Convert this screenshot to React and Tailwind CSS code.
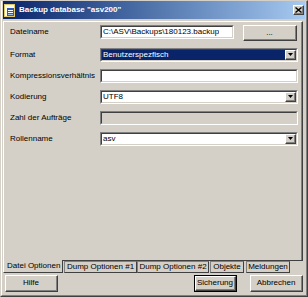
import React from "react";

const Sunken = ({ className = "", inner = "bg-white", children }) => (
  <div className={`border border-t-[#808080] border-l-[#808080] border-r-white border-b-white ${className}`}>
    <div className={`h-full w-full border border-t-[#404040] border-l-[#404040] border-r-[#d4d0c8] border-b-[#d4d0c8] flex items-center ${inner}`}>
      {children}
    </div>
  </div>
);

const Raised = ({ className = "", children }) => (
  <div className={`border border-t-white border-l-white border-r-[#404040] border-b-[#404040] bg-[#d4d0c8] ${className}`}>
    <div className="h-full w-full border-r border-b border-[#808080] flex items-center justify-center">
      {children}
    </div>
  </div>
);

const Arrow = () => (
  <Raised className="w-[11px] h-full shrink-0">
    <svg width="5" height="3" viewBox="0 0 5 3">
      <polygon points="0,0 5,0 2.5,3" fill="#000" />
    </svg>
  </Raised>
);

const Label = ({ children }) => (
  <div className="w-[90px] shrink-0 leading-[14px]">{children}</div>
);

const Combo = ({ text, selected }) => (
  <Sunken
    className="flex-1 h-[14px]"
    inner={selected ? "bg-[#0a246a] text-white" : "bg-white"}
  >
    <span className="flex-1 pl-[1px] leading-[10px] whitespace-nowrap overflow-hidden">{text}</span>
    <Arrow />
  </Sunken>
);

const Tab = ({ children, className = "" }) => (
  <div className={`h-[12px] border border-[#808080] border-r-[#404040] border-b-[#404040] flex items-center justify-center whitespace-nowrap leading-[10px] ${className}`}>
    {children}
  </div>
);

export default function App() {
  return (
    <div className="w-[308px] h-[297px] bg-[#d4d0c8] border border-t-[#d4d0c8] border-l-[#d4d0c8] border-r-[#404040] border-b-[#404040] font-['Liberation_Sans',Arial,sans-serif] text-[8px] text-black overflow-hidden">
      <div className="h-full w-full border-l border-r border-b border-l-white border-r-[#808080] border-b-[#808080] px-[1px] flex flex-col">
        {/* Title bar */}
        <div className="h-[18px] shrink-0 bg-linear-to-r from-[#0a246a] to-[#a6caf0] flex items-center">
          <svg width="11" height="13" viewBox="0 0 11 13" className="ml-[1px] shrink-0">
            <rect x="0.5" y="0.5" width="10" height="12" fill="#fffbe8" stroke="#e2c96a" />
            <rect x="3" y="4" width="7" height="8" fill="#2a5cc0" />
            <rect x="4" y="6" width="5" height="1" fill="#ffffff" />
            <rect x="4" y="8" width="5" height="1" fill="#ffffff" />
            <rect x="4" y="10" width="5" height="1" fill="#9cc0f0" />
          </svg>
          <span className="ml-[4px] text-white font-bold leading-[10px] whitespace-nowrap">Backup database "asv200"</span>
          <div className="ml-auto mr-[1px]">
            <Raised className="w-[11px] h-[10px]">
              <svg width="7" height="6" viewBox="0 0 7 6">
                <path d="M0.5 0.5 L6.5 5.5 M6.5 0.5 L0.5 5.5" stroke="#000" strokeWidth="1.4" />
              </svg>
            </Raised>
          </div>
        </div>

        {/* Tab pane */}
        <div className="mt-[2px] mr-[2px] h-[239px] shrink-0 border-l border-t border-r border-l-white border-t-white border-r-[#404040]">
          <div className="h-full border-r border-[#808080] pl-[6px] pr-[2px] pt-[3px] flex flex-col gap-[7px]">
            <div className="flex h-[16px] items-start">
              <Label>Dateiname</Label>
              <Sunken className="w-[134px] h-[14px]">
                <span className="pl-[1px] leading-[10px] whitespace-nowrap overflow-hidden">{"C:\\ASV\\Backups\\180123.backup"}</span>
              </Sunken>
              <Raised className="ml-[9px] w-[54px] h-[16px]">
                <span className="leading-[10px]">...</span>
              </Raised>
            </div>
            <div className="flex h-[14px] pr-[1px]">
              <Label>Format</Label>
              <Combo text="Benutzerspezfisch" selected />
            </div>
            <div className="flex h-[14px] pr-[1px]">
              <Label>Kompressionsverhältnis</Label>
              <Sunken className="flex-1 h-[14px]" />
            </div>
            <div className="flex h-[14px] pr-[1px]">
              <Label>Kodierung</Label>
              <Combo text="UTF8" />
            </div>
            <div className="flex h-[14px] pr-[1px]">
              <Label>Zahl der Aufträge</Label>
              <Sunken className="flex-1 h-[14px]" inner="bg-[#d4d0c8]" />
            </div>
            <div className="flex h-[14px] pr-[1px]">
              <Label>Rollenname</Label>
              <Combo text="asv" />
            </div>
          </div>
        </div>

        {/* Tabs */}
        <div className="h-[13px] shrink-0 flex mr-[2px]">
          <div className="w-[60px] h-full border-l border-r border-b border-l-white border-r-[#404040] border-b-[#404040] pl-[3px] flex items-center whitespace-nowrap leading-[10px]">
            Datei Optionen
          </div>
          <div className="flex-1 border-t border-[#404040] flex items-start">
            <Tab className="w-[73px] ml-[1px]">Dump Optionen #1</Tab>
            <Tab className="w-[72px]">Dump Optionen #2</Tab>
            <Tab className="w-[34px] ml-[1px]">Objekte</Tab>
            <Tab className="w-[44px] ml-[2px]">Meldungen</Tab>
          </div>
        </div>

        {/* Buttons */}
        <div className="mt-[2px] h-[17px] shrink-0 flex pl-[2px] pr-[2px]">
          <Raised className="w-[53px] h-full">
            <span className="leading-[10px]">Hilfe</span>
          </Raised>
          <div className="ml-auto w-[43px] h-full border border-black">
            <Raised className="w-full h-full">
              <span className="leading-[10px]">Sicherung</span>
            </Raised>
          </div>
          <Raised className="ml-[13px] w-[53px] h-full">
            <span className="leading-[10px]">Abbrechen</span>
          </Raised>
        </div>
      </div>
    </div>
  );
}
